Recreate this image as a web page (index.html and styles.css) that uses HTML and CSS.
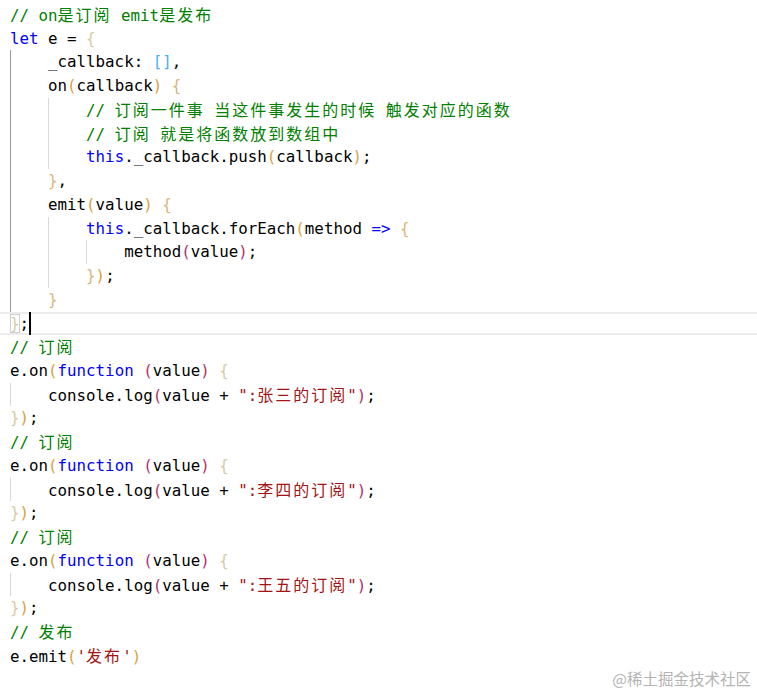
FILE: index.html
```html
<!DOCTYPE html>
<html lang="zh">
<head>
<meta charset="utf-8">
<title>code</title>
<link rel="stylesheet" href="styles.css">
</head>
<body>
<div class="editor">
<div class="ln"><span class="c">// on<span class="cj">是订阅</span> emit<span class="cj">是发布</span></span></div>
<div class="ln"><span class="k">let</span> e = <span class="b1">{</span></div>
<div class="ln"><span class="ind ga">    </span>_callback: <span class="bl">[]</span>,</div>
<div class="ln"><span class="ind ga">    </span>on<span class="b2">(</span>callback<span class="b2">)</span> <span class="bt">{</span></div>
<div class="ln"><span class="ind ga">    </span><span class="ind g">    </span><span class="c">// <span class="cj">订阅一件事</span> <span class="cj">当这件事发生的时候</span> <span class="cj">触发对应的函数</span></span></div>
<div class="ln"><span class="ind ga">    </span><span class="ind g">    </span><span class="c">// <span class="cj">订阅</span> <span class="cj">就是将函数放到数组中</span></span></div>
<div class="ln"><span class="ind ga">    </span><span class="ind g">    </span><span class="k">this</span>._callback.push<span class="b2">(</span>callback<span class="b2">)</span>;</div>
<div class="ln"><span class="ind ga">    </span><span class="bt">}</span>,</div>
<div class="ln"><span class="ind ga">    </span>emit<span class="b2">(</span>value<span class="b2">)</span> <span class="bt">{</span></div>
<div class="ln"><span class="ind ga">    </span><span class="ind g">    </span><span class="k">this</span>._callback.forEach<span class="b2">(</span>method <span class="k">=&gt;</span> <span class="bt">{</span></div>
<div class="ln"><span class="ind ga">    </span><span class="ind g">    </span><span class="ind g">    </span>method<span class="b3">(</span>value<span class="b3">)</span>;</div>
<div class="ln"><span class="ind ga">    </span><span class="ind g">    </span><span class="bt">}</span><span class="b2">)</span>;</div>
<div class="ln"><span class="ind ga">    </span><span class="bt">}</span></div>
<div class="ln cur"><span class="b1 match">}</span>;<span class="caret"></span></div>
<div class="ln"><span class="c">// <span class="cj">订阅</span></span></div>
<div class="ln">e.on<span class="b2">(</span><span class="k">function</span> <span class="b3">(</span>value<span class="b3">)</span> <span class="b1">{</span></div>
<div class="ln"><span class="ind g">    </span>console.log<span class="b3">(</span>value + <span class="s">":<span class="cj">张三的订阅</span>"</span><span class="b3">)</span>;</div>
<div class="ln"><span class="b1">}</span><span class="b2">)</span>;</div>
<div class="ln"><span class="c">// <span class="cj">订阅</span></span></div>
<div class="ln">e.on<span class="b2">(</span><span class="k">function</span> <span class="b3">(</span>value<span class="b3">)</span> <span class="b1">{</span></div>
<div class="ln"><span class="ind g">    </span>console.log<span class="b3">(</span>value + <span class="s">":<span class="cj">李四的订阅</span>"</span><span class="b3">)</span>;</div>
<div class="ln"><span class="b1">}</span><span class="b2">)</span>;</div>
<div class="ln"><span class="c">// <span class="cj">订阅</span></span></div>
<div class="ln">e.on<span class="b2">(</span><span class="k">function</span> <span class="b3">(</span>value<span class="b3">)</span> <span class="b1">{</span></div>
<div class="ln"><span class="ind g">    </span>console.log<span class="b3">(</span>value + <span class="s">":<span class="cj">王五的订阅</span>"</span><span class="b3">)</span>;</div>
<div class="ln"><span class="b1">}</span><span class="b2">)</span>;</div>
<div class="ln"><span class="c">// <span class="cj">发布</span></span></div>
<div class="ln">e.emit<span class="b2">(</span><span class="s">'<span class="cj">发布</span>'</span><span class="b2">)</span></div>
</div>
<div class="watermark">@稀土掘金技术社区</div>
</body>
</html>
```
FILE: styles.css
```css
html, body {
  margin: 0;
  padding: 0;
  background: #ffffff;
}
body {
  width: 757px;
  height: 693px;
  overflow: hidden;
  position: relative;
}
.editor {
  padding-top: 3px;
  font-family: "DejaVu Sans Mono", "Liberation Mono", "Noto Sans CJK SC", monospace;
  font-size: 15.8px;
  color: #000000;
}
.ln {
  height: 23.74px;
  line-height: 23.74px;
  white-space: pre;
  padding-left: 10px;
}
.cur {
  box-shadow: inset 0 2px 0 #ececec, inset 0 -2px 0 #ececec;
}
.cj {
  font-family: "Noto Sans CJK SC", sans-serif;
  font-size: 16px;
  letter-spacing: 2px;
}
.c { color: #008000; }
.k { color: #0000ff; }
.s { color: #a31515; }
.b1 { color: #d6cba6; }
.bt { color: #d8b67e; }
.b2 { color: #dba040; }
.b3 { color: #b02f70; }
.bl { color: #48b0ea; }
.match {
  outline: 1px solid #cfcfcf;
  outline-offset: -1px;
}
.ind {
  display: inline-block;
  height: 23.74px;
  vertical-align: top;
  box-shadow: inset 1px 0 0 #d9d9d9;
}
.ind.ga {
  box-shadow: inset 1px 0 0 #9a9a9a;
}
.caret {
  display: inline-block;
  width: 0;
  height: 23.74px;
  vertical-align: top;
  border-left: 2px solid #000000;
  margin-right: -2px;
}
.watermark {
  position: absolute;
  right: 6px;
  top: 667px;
  font-family: "Noto Sans CJK SC", sans-serif;
  font-size: 15.5px;
  line-height: 22px;
  color: #b4b4b4;
}
```
